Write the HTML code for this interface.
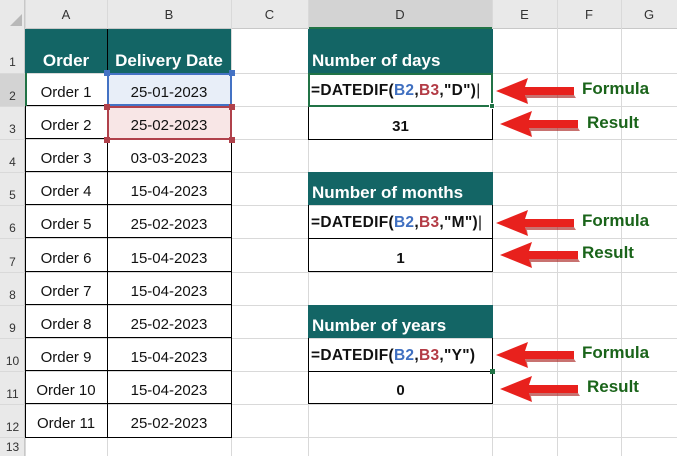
<!DOCTYPE html>
<html><head><meta charset="utf-8"><style>
body{margin:0;width:677px;height:456px;overflow:hidden;background:#fff;font-family:"Liberation Sans",Arial,sans-serif;position:relative}
.a{position:absolute;box-sizing:border-box}
.vl{position:absolute;top:0;width:1px;height:456px;background:#d9d9d9}
.hl{position:absolute;left:0;height:1px;width:677px;background:#d9d9d9}
.ch{position:absolute;top:0;height:29px;line-height:29px;text-align:center;font-size:13px;color:#333}
.rn{position:absolute;left:0;width:25px;text-align:center;font-size:12px;color:#333}
.c{position:absolute;text-align:center;font-size:15px;color:#111;display:flex;align-items:flex-end;justify-content:center;padding-bottom:5px;box-sizing:border-box}
.g{background:#136565;color:#fff;font-weight:bold;font-size:17px;padding-bottom:2px}
.lab{position:absolute;color:#1a641a;font-weight:bold;font-size:17px}
.f{position:absolute;left:311px;font-weight:bold;font-size:15.5px;color:#111;letter-spacing:0.3px}
.bl{color:#3f6fc0}.rd{color:#b33b45}
</style></head><body>
<div class="a" style="left:0;top:0;width:677px;height:29px;background:#e9e9e9;border-bottom:1px solid #c8c8c8"></div>
<div class="a" style="left:0;top:0;width:25px;height:456px;background:#e9e9e9;border-right:1px solid #c8c8c8"></div>
<div class="a" style="left:308px;top:0;width:185px;height:29px;background:#d3d3d3;border-bottom:2px solid #217346"></div>
<div class="a" style="left:0;top:73px;width:25px;height:33px;background:#d3d3d3"></div>
<svg class="a" style="left:9px;top:13px" width="14" height="14"><polygon points="13,1 13,13 1,13" fill="#b8b8b8"/></svg>
<div class="vl" style="left:25px"></div><div class="vl" style="left:107px"></div><div class="vl" style="left:231px"></div><div class="vl" style="left:308px"></div><div class="vl" style="left:492px"></div><div class="vl" style="left:557px"></div><div class="vl" style="left:621px"></div>
<div class="hl" style="top:73px"></div><div class="hl" style="top:106px"></div><div class="hl" style="top:139px"></div><div class="hl" style="top:172px"></div><div class="hl" style="top:205px"></div><div class="hl" style="top:238px"></div><div class="hl" style="top:272px"></div><div class="hl" style="top:305px"></div><div class="hl" style="top:338px"></div><div class="hl" style="top:371px"></div><div class="hl" style="top:404px"></div><div class="hl" style="top:437px"></div>
<div class="ch" style="left:25px;width:82px">A</div><div class="ch" style="left:107px;width:124px">B</div><div class="ch" style="left:231px;width:77px">C</div><div class="ch" style="left:308px;width:184px">D</div><div class="ch" style="left:492px;width:65px">E</div><div class="ch" style="left:557px;width:64px">F</div><div class="ch" style="left:621px;width:56px">G</div>
<div class="rn" style="top:55px">1</div><div class="rn" style="top:89px">2</div><div class="rn" style="top:122px">3</div><div class="rn" style="top:155px">4</div><div class="rn" style="top:188px">5</div><div class="rn" style="top:221px">6</div><div class="rn" style="top:255px">7</div><div class="rn" style="top:288px">8</div><div class="rn" style="top:321px">9</div><div class="rn" style="top:354px">10</div><div class="rn" style="top:387px">11</div><div class="rn" style="top:420px">12</div><div class="rn" style="top:440px">13</div>
<div class="c g" style="left:25px;top:29px;width:82px;height:44px">Order</div>
<div class="c g" style="left:107px;top:29px;width:124px;height:44px">Delivery Date</div>
<div class="a" style="left:25px;top:73px;width:207px;height:365px;border:1px solid #000;border-top:none"></div>
<div class="a" style="left:107px;top:29px;width:1px;height:409px;background:#000"></div>
<div class="a" style="left:25px;top:105px;width:207px;height:1px;background:#000"></div><div class="a" style="left:25px;top:138px;width:207px;height:1px;background:#000"></div><div class="a" style="left:25px;top:171px;width:207px;height:1px;background:#000"></div><div class="a" style="left:25px;top:204px;width:207px;height:1px;background:#000"></div><div class="a" style="left:25px;top:237px;width:207px;height:1px;background:#000"></div><div class="a" style="left:25px;top:271px;width:207px;height:1px;background:#000"></div><div class="a" style="left:25px;top:304px;width:207px;height:1px;background:#000"></div><div class="a" style="left:25px;top:337px;width:207px;height:1px;background:#000"></div><div class="a" style="left:25px;top:370px;width:207px;height:1px;background:#000"></div><div class="a" style="left:25px;top:403px;width:207px;height:1px;background:#000"></div>
<div class="a" style="left:25px;top:73px;width:2px;height:33px;background:#217346"></div>
<div class="a" style="left:107px;top:73px;width:125px;height:33px;background:#e8eef8;border:2px solid #4472c4"></div>
<div class="a" style="left:107px;top:106px;width:125px;height:34px;background:#f8e6e6;border:2px solid #b0414b"></div>
<div class="a" style="left:104px;top:70px;width:6px;height:6px;background:#4472c4"></div><div class="a" style="left:229px;top:70px;width:6px;height:6px;background:#4472c4"></div>
<div class="a" style="left:104px;top:104px;width:6px;height:6px;background:#b0414b"></div><div class="a" style="left:229px;top:104px;width:6px;height:6px;background:#b0414b"></div><div class="a" style="left:104px;top:137px;width:6px;height:6px;background:#b0414b"></div><div class="a" style="left:229px;top:137px;width:6px;height:6px;background:#b0414b"></div>
<div class="c" style="left:25px;top:73px;width:82px;height:33px">Order 1</div><div class="c" style="left:107px;top:73px;width:124px;height:33px">25-01-2023</div>
<div class="c" style="left:25px;top:106px;width:82px;height:33px">Order 2</div><div class="c" style="left:107px;top:106px;width:124px;height:33px">25-02-2023</div>
<div class="c" style="left:25px;top:139px;width:82px;height:33px">Order 3</div><div class="c" style="left:107px;top:139px;width:124px;height:33px">03-03-2023</div>
<div class="c" style="left:25px;top:172px;width:82px;height:33px">Order 4</div><div class="c" style="left:107px;top:172px;width:124px;height:33px">15-04-2023</div>
<div class="c" style="left:25px;top:205px;width:82px;height:33px">Order 5</div><div class="c" style="left:107px;top:205px;width:124px;height:33px">25-02-2023</div>
<div class="c" style="left:25px;top:238px;width:82px;height:34px">Order 6</div><div class="c" style="left:107px;top:238px;width:124px;height:34px">15-04-2023</div>
<div class="c" style="left:25px;top:272px;width:82px;height:33px">Order 7</div><div class="c" style="left:107px;top:272px;width:124px;height:33px">15-04-2023</div>
<div class="c" style="left:25px;top:305px;width:82px;height:33px">Order 8</div><div class="c" style="left:107px;top:305px;width:124px;height:33px">25-02-2023</div>
<div class="c" style="left:25px;top:338px;width:82px;height:33px">Order 9</div><div class="c" style="left:107px;top:338px;width:124px;height:33px">15-04-2023</div>
<div class="c" style="left:25px;top:371px;width:82px;height:33px">Order 10</div><div class="c" style="left:107px;top:371px;width:124px;height:33px">15-04-2023</div>
<div class="c" style="left:25px;top:404px;width:82px;height:33px">Order 11</div><div class="c" style="left:107px;top:404px;width:124px;height:33px">25-02-2023</div>
<div class="c g" style="left:308px;top:29px;width:185px;height:44px;justify-content:flex-start;padding-left:4px">Number of days</div>
<div class="a" style="left:308px;top:73px;width:185px;height:67px;border:1px solid #000;border-top:none"></div>
<div class="a" style="left:308px;top:106px;width:185px;height:1px;background:#000"></div>
<div class="a" style="left:308px;top:73px;width:185px;height:34px;border:2px solid #217346"></div>
<div class="a" style="left:489px;top:103px;width:6px;height:6px;background:#217346;border:1px solid #fff"></div>
<div class="f" style="top:82px">=DATEDIF(<span class="bl">B2</span>,<span class="rd">B3</span>,"D")<span style="font-weight:normal">|</span></div>
<div class="c" style="left:308px;top:106px;width:185px;height:34px;font-weight:bold">31</div>
<div class="c g" style="left:308px;top:172px;width:185px;height:33px;justify-content:flex-start;padding-left:4px">Number of months</div>
<div class="a" style="left:308px;top:205px;width:185px;height:67px;border:1px solid #000;border-top:none"></div>
<div class="a" style="left:308px;top:238px;width:185px;height:1px;background:#000"></div>
<div class="f" style="top:214px">=DATEDIF(<span class="bl">B2</span>,<span class="rd">B3</span>,"M")<span style="font-weight:normal">|</span></div>
<div class="c" style="left:308px;top:238px;width:185px;height:34px;font-weight:bold">1</div>
<div class="c g" style="left:308px;top:305px;width:185px;height:33px;justify-content:flex-start;padding-left:4px">Number of years</div>
<div class="a" style="left:308px;top:338px;width:185px;height:66px;border:1px solid #000;border-top:none"></div>
<div class="a" style="left:308px;top:371px;width:185px;height:1px;background:#000"></div>
<div class="a" style="left:490px;top:369px;width:5px;height:5px;background:#217346"></div>
<div class="f" style="top:347px">=DATEDIF(<span class="bl">B2</span>,<span class="rd">B3</span>,"Y")</div>
<div class="c" style="left:308px;top:371px;width:185px;height:33px;font-weight:bold">0</div>
<svg class="a" style="left:0;top:0" width="677" height="456">
<defs><g id="ar"><polygon points="0,0 32,-13 29,-4 78,-4 78,4 29,4 32,13" fill="#e8211d"/><polygon points="29,4 78,4 80,7 31,7 32,13" fill="#a31411" opacity=".6"/></g></defs>
<use href="#ar" x="496" y="91"/><use href="#ar" x="500" y="124"/>
<use href="#ar" x="496" y="223"/><use href="#ar" x="500" y="255"/>
<use href="#ar" x="496" y="355"/><use href="#ar" x="500" y="389"/>
</svg>
<div class="lab" style="left:582px;top:79px">Formula</div><div class="lab" style="left:587px;top:113px">Result</div>
<div class="lab" style="left:582px;top:211px">Formula</div><div class="lab" style="left:582px;top:243px">Result</div>
<div class="lab" style="left:582px;top:343px">Formula</div><div class="lab" style="left:587px;top:377px">Result</div>
</body></html>
